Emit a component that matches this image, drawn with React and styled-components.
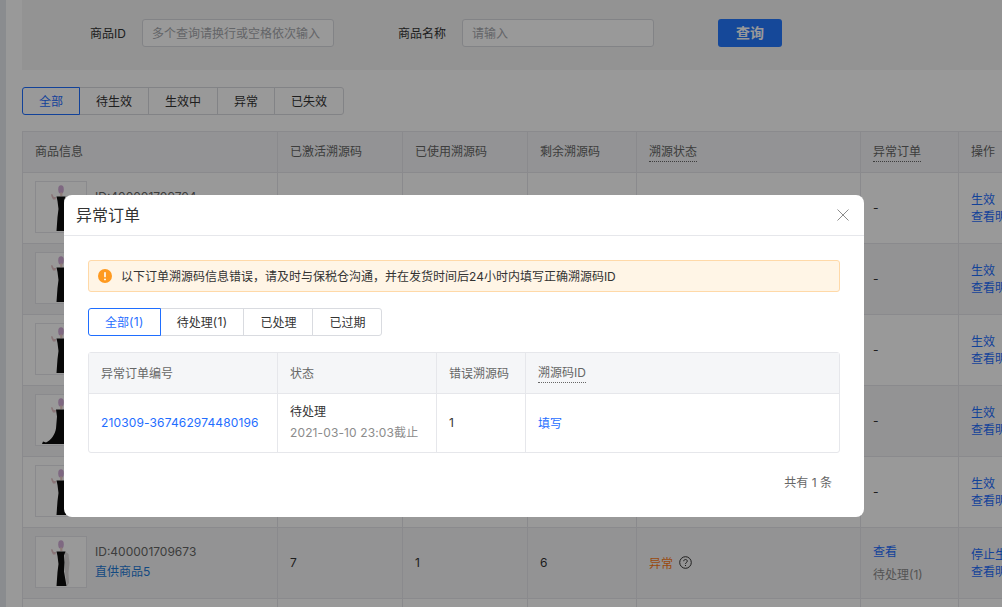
import React from "react";
import styled, { createGlobalStyle } from "styled-components";

const GlobalStyle = createGlobalStyle`
  html, body {
    margin: 0;
    padding: 0;
    height: 100%;
    overflow: hidden;
    background: #fff;
    font-family: Inter, "Noto Sans CJK SC", sans-serif;
    font-size: 12px;
    color: #333;
  }
  * {
    box-sizing: border-box;
  }
`;

const Shell = styled.div`
  display: flex;
  height: 607px;
  overflow: hidden;
`;

const SideEdge = styled.aside`
  flex: none;
  width: 6px;
  background: #e6e9ef;
`;

const Main = styled.main`
  flex: 1;
  min-width: 0;
  padding-left: 16px;
`;

const FilterPanel = styled.section`
  display: flex;
  align-items: center;
  height: 70px;
  padding: 0 0 4px 68px;
  background: #f5f5f6;
`;

const FilterLabel = styled.label`
  width: ${(props) => props.$w}px;
  flex: none;
  padding-bottom: 2px;
  color: #333;
  white-space: nowrap;
`;

const FilterInput = styled.input`
  width: 192px;
  height: 28px;
  margin-right: ${(props) => props.$gap}px;
  padding: 0 9px;
  border: 1px solid #d9dbe0;
  border-radius: 3px;
  background: #fff;
  font: inherit;
  outline: none;
  &::placeholder {
    color: #a6a8ad;
    opacity: 1;
  }
`;

const QueryButton = styled.button`
  width: 64px;
  height: 28px;
  padding: 0 0 2px;
  border: none;
  border-radius: 3px;
  background: #2479ff;
  color: #fff;
  font: inherit;
  font-size: 14px;
  font-weight: 700;
`;

const Tabs = styled.div`
  display: flex;
  height: 28px;
  margin: ${(props) => props.$margin};
`;

const Tab = styled.div`
  display: flex;
  align-items: center;
  justify-content: center;
  position: relative;
  z-index: ${(props) => (props.$active ? 1 : 0)};
  margin-left: -1px;
  padding: 0 16px 2px;
  border: 1px solid ${(props) => (props.$active ? "#1f6eff" : "#d9dbe0")};
  background: #fff;
  color: ${(props) => (props.$active ? "#1f6eff" : "#333")};
  white-space: nowrap;
  &:first-child {
    margin-left: 0;
    border-radius: 3px 0 0 3px;
  }
  &:last-child {
    border-radius: 0 3px 3px 0;
  }
`;

const Count = styled.span`
  letter-spacing: 0.35px;
`;

const GoodsTable = styled.table`
  width: 1040px;
  table-layout: fixed;
  border-collapse: separate;
  border-spacing: 0;
  border-top: 1px solid #e6e7eb;
  border-left: 1px solid #e6e7eb;

  th,
  td {
    padding: 0 12px 2px;
    border-right: 1px solid #e6e7eb;
    border-bottom: 1px solid #e6e7eb;
    text-align: left;
    white-space: nowrap;
    overflow: hidden;
  }
  th {
    height: 41px;
    padding-bottom: 3px;
    background: #f5f6f8;
    color: #666;
    font-weight: 400;
  }
  td {
    height: 71px;
  }
  tbody tr:nth-child(even) td {
    background: #f6f6f7;
  }
`;

const Col = styled.col`
  width: ${(props) => props.$w}px;
`;

const TipLabel = styled.span`
  display: inline-block;
  margin-top: 3px;
  line-height: 18px;
  border-bottom: 1px dotted #666;
`;

const Goods = styled.div`
  display: flex;
  align-items: center;
  gap: 8px;
`;

const Thumb = styled.div`
  flex: none;
  width: 52px;
  height: 52px;
  border: 1px solid #e6e7eb;
  background: #fff;
  svg {
    display: block;
  }
`;

const GoodsText = styled.div`
  display: flex;
  flex-direction: column;
  gap: 3px;
  padding-bottom: 2px;
  line-height: 17px;
  color: #666;
`;

const GoodsName = styled.a`
  color: #1f7ad8;
`;

const Stack = styled.div`
  display: flex;
  flex-direction: column;
  gap: ${(props) => props.$gap || 0}px;
  margin-top: 2px;
  line-height: 17px;
`;

const Link = styled.a`
  color: #1f6eff;
  cursor: pointer;
`;

const OrderNo = styled(Link)`
  letter-spacing: 0.14px;
`;

const Muted = styled.span`
  color: #8c8c8c;
`;

const Deadline = styled(Muted)`
  letter-spacing: 0.12px;
`;

const StatusBad = styled.span`
  display: inline-flex;
  align-items: center;
  gap: 6px;
  color: #ff7a14;
  svg {
    color: #333;
  }
`;

const Overlay = styled.div`
  position: fixed;
  inset: 0;
  z-index: 10;
  display: flex;
  align-items: flex-start;
  padding: 195px 0 0 64px;
  background: rgba(0, 0, 0, 0.4);
`;

const Modal = styled.div`
  width: 800px;
  height: 322px;
  border-radius: 8px;
  background: #fff;
`;

const ModalHead = styled.header`
  display: flex;
  align-items: center;
  justify-content: space-between;
  height: 41px;
  padding: 0 14px 2px 12px;
  border-bottom: 1px solid #e6e7eb;
  font-size: 16px;
  color: #333;
`;

const CloseBtn = styled.button`
  display: flex;
  margin-top: 2px;
  padding: 0;
  border: none;
  background: none;
  color: #8c8c8c;
`;

const ModalBody = styled.div`
  padding: 24px 24px 0;
`;

const Notice = styled.div`
  display: flex;
  align-items: center;
  gap: 9px;
  height: 32px;
  padding: 0 9px 2px;
  border: 1px solid #ffd9a8;
  border-radius: 3px;
  background: #fff5e6;
  color: #333;
  svg {
    margin-top: 1px;
  }
`;

const OrderTable = styled.table`
  width: 100%;
  table-layout: fixed;
  border-collapse: separate;
  border-spacing: 0;
  border: 1px solid #e6e7eb;
  border-radius: 3px;

  th,
  td {
    padding: 0 12px 2px;
    border-right: 1px solid #e6e7eb;
    text-align: left;
    white-space: nowrap;
  }
  th:last-child,
  td:last-child {
    border-right: none;
  }
  th {
    height: 41px;
    border-bottom: 1px solid #e6e7eb;
    background: #f5f6f8;
    color: #666;
    font-weight: 400;
  }
  td {
    height: 58px;
  }
  ${Stack} {
    margin-top: 0;
  }
  ${TipLabel} {
    margin-top: 2px;
  }
`;

const Total = styled.div`
  margin-top: 21px;
  padding-right: 8px;
  text-align: right;
  line-height: 18px;
  color: #666;
`;

const goods = [
  { id: "400001709704", name: "直供商品10", op: "生效" },
  { id: "400001709703", name: "直供商品9", op: "生效" },
  { id: "400001709702", name: "直供商品8", op: "生效" },
  { id: "400001709701", name: "直供商品7", op: "生效", train: true },
  { id: "400001709674", name: "直供商品6", op: "生效" },
  { id: "400001709673", name: "直供商品5", op: "停止生效", bad: true, nums: [7, 1, 6] },
  { id: "400001709672", name: "直供商品4", op: "生效" },
];

function Figure({ train }) {
  return (
    <svg width="50" height="50" viewBox="0 0 50 50">
      <path d="M15 12.500l1.200-.5 1.500 3 2.300 0-.5 2.500-2.500 0-1.500-3z" fill="#e6c4c8" />
      <path d="M29 14.500l3.500 2.500 1 9-1 10 .5 10-2 3-2-14 0-12z" fill="#dedbdb" />
      <ellipse cx="25" cy="7.500" rx="2.800" ry="4.200" fill="#d3aed8" />
      <rect x="24.200" y="10.500" width="2.200" height="3.500" fill="#ecccc6" />
      {train ? (
        <path d="M20 14.500h9.500l-1.500 4 .5 7 1 10 .5 13.500H6l1-2.500 3 1c5-2 9-8 10-14l1-12z" fill="#0c0c0c" />
      ) : (
        <path d="M20.500 14.500h9l-1.500 4 .5 7-.5 9 2.500 14.500H20.500l1-14 1-8-1-8z" fill="#0c0c0c" />
      )}
    </svg>
  );
}

const Cross = () => (
  <svg width="14" height="14" viewBox="0 0 14 14" fill="none" stroke="currentColor" strokeWidth="1">
    <path d="M1.500 1.500l11 11M12.500 1.500l-11 11" />
  </svg>
);

const WarnIcon = () => (
  <svg width="14" height="14" viewBox="0 0 14 14">
    <circle cx="7" cy="7" r="7" fill="#ff9a1f" />
    <rect x="6.200" y="3" width="1.600" height="5.400" rx="0.800" fill="#fff" />
    <circle cx="7" cy="10.400" r="0.950" fill="#fff" />
  </svg>
);

const HelpIcon = () => (
  <svg width="13" height="13" viewBox="0 0 13 13" fill="none" stroke="currentColor" strokeWidth="1">
    <circle cx="6.500" cy="6.500" r="5.800" />
    <path d="M4.700 5.200c0-1 .8-1.700 1.800-1.700s1.800.7 1.800 1.600c0 1.400-1.800 1.400-1.800 2.900" />
    <path d="M6.500 9v1" />
  </svg>
);

export default function App() {
  return (
    <>
      <GlobalStyle />
      <Shell>
        <SideEdge />
        <Main>
          <FilterPanel>
            <FilterLabel $w={52}>商品ID</FilterLabel>
            <FilterInput $gap={64} placeholder="多个查询请换行或空格依次输入" />
            <FilterLabel $w={64}>商品名称</FilterLabel>
            <FilterInput $gap={64} placeholder="请输入" />
            <QueryButton>查询</QueryButton>
          </FilterPanel>
          <Tabs $margin="17px 0 16px">
            <Tab $active>全部</Tab>
            <Tab>待生效</Tab>
            <Tab>生效中</Tab>
            <Tab>异常</Tab>
            <Tab>已失效</Tab>
          </Tabs>
          <GoodsTable>
            <colgroup>
              <Col $w={255} />
              <Col $w={125} />
              <Col $w={125} />
              <Col $w={109} />
              <Col $w={224} />
              <Col $w={98} />
              <Col $w={104} />
            </colgroup>
            <thead>
              <tr>
                <th>商品信息</th>
                <th>已激活溯源码</th>
                <th>已使用溯源码</th>
                <th>剩余溯源码</th>
                <th><TipLabel>溯源状态</TipLabel></th>
                <th><TipLabel>异常订单</TipLabel></th>
                <th>操作</th>
              </tr>
            </thead>
            <tbody>
              {goods.map((g) => (
                <tr key={g.id}>
                  <td>
                    <Goods>
                      <Thumb><Figure train={g.train} /></Thumb>
                      <GoodsText>
                        <span>ID:{g.id}</span>
                        <GoodsName>{g.name}</GoodsName>
                      </GoodsText>
                    </Goods>
                  </td>
                  <td>{g.nums ? g.nums[0] : 10}</td>
                  <td>{g.nums ? g.nums[1] : 0}</td>
                  <td>{g.nums ? g.nums[2] : 10}</td>
                  <td>
                    {g.bad ? (
                      <StatusBad>异常 <HelpIcon /></StatusBad>
                    ) : (
                      "待生效"
                    )}
                  </td>
                  <td>
                    {g.bad ? (
                      <Stack $gap={6}>
                        <Link>查看</Link>
                        <Muted>待处理(1)</Muted>
                      </Stack>
                    ) : (
                      "-"
                    )}
                  </td>
                  <td>
                    <Stack>
                      <Link>{g.op}</Link>
                      <Link>查看明细</Link>
                    </Stack>
                  </td>
                </tr>
              ))}
            </tbody>
          </GoodsTable>
        </Main>
      </Shell>
      <Overlay>
        <Modal>
          <ModalHead>
            异常订单
            <CloseBtn aria-label="关闭"><Cross /></CloseBtn>
          </ModalHead>
          <ModalBody>
            <Notice>
              <WarnIcon />
              以下订单溯源码信息错误，请及时与保税仓沟通，并在发货时间后24小时内填写正确溯源码ID
            </Notice>
            <Tabs $margin="16px 0">
              <Tab $active>全部<Count>(1)</Count></Tab>
              <Tab>待处理<Count>(1)</Count></Tab>
              <Tab>已处理</Tab>
              <Tab>已过期</Tab>
            </Tabs>
            <OrderTable>
              <colgroup>
                <Col $w={189} />
                <Col $w={159} />
                <Col $w={89} />
                <col />
              </colgroup>
              <thead>
                <tr>
                  <th>异常订单编号</th>
                  <th>状态</th>
                  <th>错误溯源码</th>
                  <th><TipLabel>溯源码ID</TipLabel></th>
                </tr>
              </thead>
              <tbody>
                <tr>
                  <td><OrderNo>210309-367462974480196</OrderNo></td>
                  <td>
                    <Stack $gap={4}>
                      <span>待处理</span>
                      <Deadline>2021-03-10 23:03截止</Deadline>
                    </Stack>
                  </td>
                  <td>1</td>
                  <td><Link>填写</Link></td>
                </tr>
              </tbody>
            </OrderTable>
            <Total>共有 1 条</Total>
          </ModalBody>
        </Modal>
      </Overlay>
    </>
  );
}
